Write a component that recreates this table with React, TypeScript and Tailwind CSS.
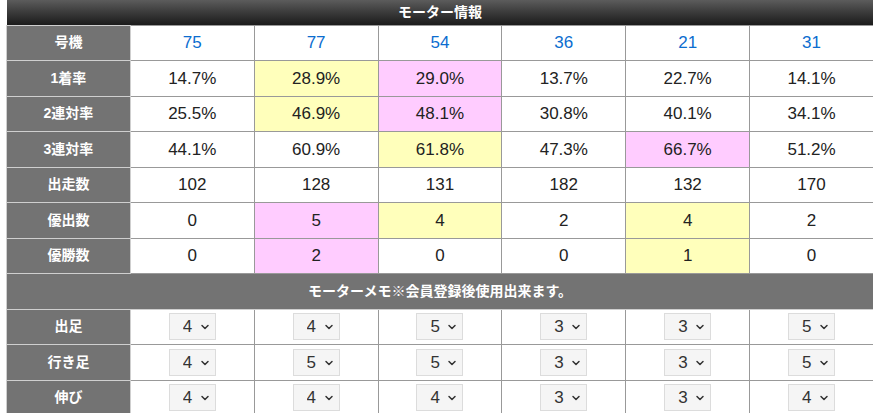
import { ChevronDown } from "lucide-react";

type Tone = "" | "y" | "p";

const motors = ["75", "77", "54", "36", "21", "31"];

const stats: { label: string; cells: [string, Tone][] }[] = [
  {
    label: "1着率",
    cells: [["14.7%", ""], ["28.9%", "y"], ["29.0%", "p"], ["13.7%", ""], ["22.7%", ""], ["14.1%", ""]],
  },
  {
    label: "2連対率",
    cells: [["25.5%", ""], ["46.9%", "y"], ["48.1%", "p"], ["30.8%", ""], ["40.1%", ""], ["34.1%", ""]],
  },
  {
    label: "3連対率",
    cells: [["44.1%", ""], ["60.9%", ""], ["61.8%", "y"], ["47.3%", ""], ["66.7%", "p"], ["51.2%", ""]],
  },
  {
    label: "出走数",
    cells: [["102", ""], ["128", ""], ["131", ""], ["182", ""], ["132", ""], ["170", ""]],
  },
  {
    label: "優出数",
    cells: [["0", ""], ["5", "p"], ["4", "y"], ["2", ""], ["4", "y"], ["2", ""]],
  },
  {
    label: "優勝数",
    cells: [["0", ""], ["2", "p"], ["0", ""], ["0", ""], ["1", "y"], ["0", ""]],
  },
];

const memos: { label: string; values: string[] }[] = [
  { label: "出足", values: ["4", "4", "5", "3", "3", "5"] },
  { label: "行き足", values: ["4", "5", "5", "3", "3", "5"] },
  { label: "伸び", values: ["4", "4", "4", "3", "3", "4"] },
];

const toneClass = (t: Tone) =>
  t === "y" ? "bg-[#ffffbb]" : t === "p" ? "bg-[#ffccff]" : "bg-white";

function Label({ children }: { children: React.ReactNode }) {
  return (
    <th className="h-[35.5px] border border-[#cfcfcf] bg-[#737373] text-[14px] font-bold text-white">
      {children}
    </th>
  );
}

function Score({ value }: { value: string }) {
  return (
    <div className="relative mx-auto w-[47px]">
      <select
        defaultValue={value}
        className="h-[27px] w-[47px] appearance-none rounded-none border border-[#dcdcdc] bg-[#f5f5f5] pl-[13px] text-[17px] text-[#333] outline-none"
      >
        {["1", "2", "3", "4", "5"].map((n) => (
          <option key={n} value={n}>
            {n}
          </option>
        ))}
      </select>
      <ChevronDown
        size={12}
        strokeWidth={3}
        className="pointer-events-none absolute right-[5px] top-[8px] text-[#333]"
      />
    </div>
  );
}

export default function App() {
  return (
    <div className="w-[873px] overflow-hidden bg-white font-['Liberation_Sans','Noto_Sans_CJK_JP',sans-serif]">
      <table className="ml-[6px] w-[868px] table-fixed border-collapse text-center">
        <thead>
          <tr>
            <th
              colSpan={7}
              className="h-[25px] bg-gradient-to-b from-[#5c5c5c] to-[#1c1c1c] text-[14px] font-bold text-white"
            >
              モーター情報
            </th>
          </tr>
        </thead>
        <tbody>
          <tr>
            <Label>号機</Label>
            {motors.map((m, i) => (
              <td key={i} className="border border-[#999] text-[17px] text-[#0b6dcf]">
                {m}
              </td>
            ))}
          </tr>
          {stats.map((row) => (
            <tr key={row.label}>
              <Label>{row.label}</Label>
              {row.cells.map(([v, t], i) => (
                <td key={i} className={`border border-[#999] text-[17px] text-[#222] ${toneClass(t)}`}>
                  {v}
                </td>
              ))}
            </tr>
          ))}
          <tr>
            <th
              colSpan={7}
              className="h-[35.5px] border border-[#cfcfcf] bg-[#737373] text-[14px] font-bold text-white"
            >
              モーターメモ※会員登録後使用出来ます。
            </th>
          </tr>
          {memos.map((row) => (
            <tr key={row.label}>
              <Label>{row.label}</Label>
              {row.values.map((v, i) => (
                <td key={i} className="border border-[#999] bg-white">
                  <Score value={v} />
                </td>
              ))}
            </tr>
          ))}
        </tbody>
      </table>
    </div>
  );
}
